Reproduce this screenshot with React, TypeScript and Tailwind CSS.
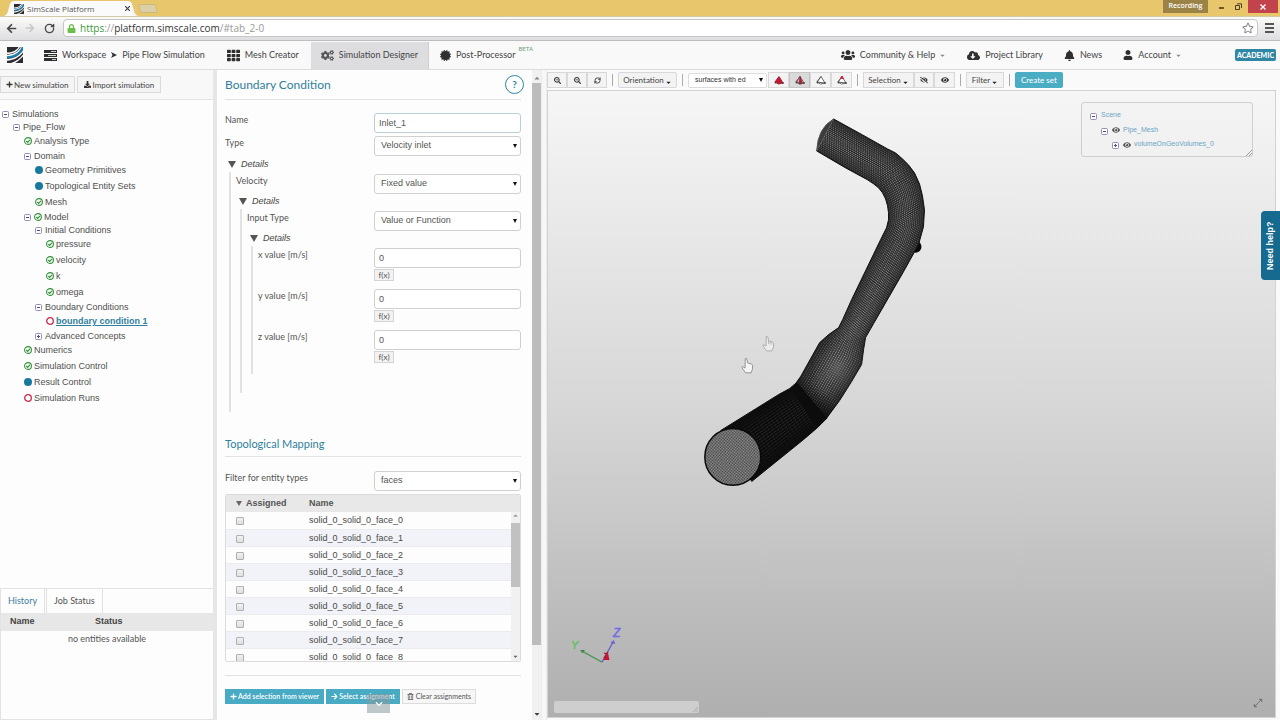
import { useState, type ReactNode } from 'react';
import {
  FaArrowLeft,
  FaArrowRight,
  FaBell,
  FaCaretDown,
  FaCaretUp,
  FaCertificate,
  FaChevronDown,
  FaCloudDownloadAlt,
  FaCogs,
  FaDownload,
  FaEye,
  FaEyeSlash,
  FaLock,
  FaPlus,
  FaRegStar,
  FaRegTrashAlt,
  FaSearchMinus,
  FaTh,
  FaUser,
  FaUsers,
} from 'react-icons/fa';
import { LuRefreshCw, LuRotateCw } from 'react-icons/lu';

type Status = 'ok' | 'info' | 'open';

interface TreeNode {
  label: string;
  status?: Status;
  toggle?: 'minus' | 'plus';
  active?: boolean;
  children?: TreeNode[];
}

const tree: TreeNode[] = [
  {
    label: 'Simulations',
    toggle: 'minus',
    children: [
      {
        label: 'Pipe_Flow',
        toggle: 'minus',
        children: [
          { label: 'Analysis Type', status: 'ok' },
          {
            label: 'Domain',
            toggle: 'minus',
            children: [
              { label: 'Geometry Primitives', status: 'info' },
              { label: 'Topological Entity Sets', status: 'info' },
              { label: 'Mesh', status: 'ok' },
            ],
          },
          {
            label: 'Model',
            toggle: 'minus',
            status: 'ok',
            children: [
              {
                label: 'Initial Conditions',
                toggle: 'minus',
                children: [
                  { label: 'pressure', status: 'ok' },
                  { label: 'velocity', status: 'ok' },
                  { label: 'k', status: 'ok' },
                  { label: 'omega', status: 'ok' },
                ],
              },
              {
                label: 'Boundary Conditions',
                toggle: 'minus',
                children: [{ label: 'boundary condition 1', status: 'open', active: true }],
              },
              { label: 'Advanced Concepts', toggle: 'plus' },
            ],
          },
          { label: 'Numerics', status: 'ok' },
          { label: 'Simulation Control', status: 'ok' },
          { label: 'Result Control', status: 'info' },
          { label: 'Simulation Runs', status: 'open' },
        ],
      },
    ],
  },
];

const faces = Array.from({ length: 9 }, (_, i) => `solid_0_solid_0_face_${i}`);

function Logo({ className }: { className: string }) {
  return (
    <svg viewBox="0 0 16 16" className={className}>
      <rect width="16" height="16" fill="#2c2c30" />
      <path d="M0 5.500 C5 5.500 9 4 11.500 0 H13 C10 5 6 7 0 7z" fill="#fff" />
      <path d="M0 8.500 C7 8 12 5 14.500 0 H16 V4 C12 9 7 11 0 11.500z" fill="#1c7fa8" />
      <path d="M0 7.800 C7 7.300 11 5 13.800 0 H14.800 C12 6 7 8.800 0 9.200z" fill="#fff" />
      <path d="M0 12 C7 11.500 12 9 16 3.500 V5.500 C12 10.500 7 13 0 13.800z" fill="#fff" />
      <path d="M4 16 C9 14.500 13 11.500 16 7.500 V9.500 C13 12.500 11 14.500 8 16z" fill="#fff" />
    </svg>
  );
}

function Toggle({ kind }: { kind: 'minus' | 'plus' }) {
  return (
    <svg viewBox="0 0 7 7" className="mr-px mt-[2px] size-[7px] shrink-0" fill="#fff" stroke="#8f8fb8">
      <rect x="0.5" y="0.5" width="6" height="6" rx="1" />
      <path d={kind === 'plus' ? 'M2 3.500h3M3.500 2v3' : 'M2 3.500h3'} stroke="#4c4c90" />
    </svg>
  );
}

function StatusIcon({ status }: { status: Status }) {
  if (status === 'info') {
    return <span className="size-2 shrink-0 rounded-full bg-[#177a9c]" />;
  }
  if (status === 'open') {
    return (
      <svg viewBox="0 0 8 8" className="size-2 shrink-0" fill="none" stroke="#c8294a">
        <circle cx="4" cy="4" r="3.300" strokeWidth="1.300" />
      </svg>
    );
  }
  return (
    <svg viewBox="0 0 8 8" className="size-2 shrink-0" fill="none" stroke="#2f9138">
      <circle cx="4" cy="4" r="3.400" strokeWidth="1.100" />
      <path d="M2.300 4 L3.600 5.300 L6 2.900" strokeWidth="1.200" />
    </svg>
  );
}

function TreeBranch({ nodes, nested }: { nodes: TreeNode[]; nested?: boolean }) {
  return (
    <ul className={nested ? 'pl-[11px]' : ''}>
      {nodes.map((node) => (
        <li key={node.label}>
          <a
            href="#"
            className={`flex items-center gap-[2px] whitespace-nowrap ${node.toggle ? 'h-[13px]' : 'h-4'} ${
              node.active ? 'font-bold text-[#2f7f9f]' : 'text-[#505050]'
            }`}
          >
            {node.toggle && <Toggle kind={node.toggle} />}
            {node.status && <StatusIcon status={node.status} />}
            <span className={node.active ? 'underline' : ''}>{node.label}</span>
          </a>
          {node.children && <TreeBranch nodes={node.children} nested />}
        </li>
      ))}
    </ul>
  );
}

function BrowserBar() {
  return (
    <div>
      <div className="flex h-4 items-end bg-[#e8c66b]">
        <div className="relative ml-1 flex h-[15px] w-[134px] items-center gap-[3px] pl-[10px] pr-2">
          <svg viewBox="0 0 134 15" className="absolute inset-0 size-full" preserveAspectRatio="none">
            <path d="M0 15 Q3 14 4 10 L6 3 Q7 0 10 0 H124 Q127 0 128 3 L130 10 Q131 14 134 15z" fill="#fafafa" />
          </svg>
          <Logo className="relative size-[10px]" />
          <span className="relative flex-1 font-['Open_Sans',sans-serif] text-[8px] leading-3 text-[#555]">
            SimScale Platform
          </span>
          <button aria-label="Close tab" className="relative">
            <svg viewBox="0 0 5 5" className="size-[5px]" stroke="#444" strokeWidth="1.200">
              <path d="M0 0 L5 5 M5 0 L0 5" />
            </svg>
          </button>
        </div>
        <button aria-label="New tab" className="mb-[3px] ml-px h-[9px] w-[18px] skew-x-12 rounded-xs border border-[#cdb87c] bg-[#dccfa6]" />
        <div className="ml-auto flex h-full items-start">
          <span className="mr-[11px] flex h-[13px] w-[45px] items-center justify-center bg-[#9b8347] font-['Open_Sans',sans-serif] text-[7px] font-semibold text-white">
            Recording
          </span>
          <button aria-label="Minimize" className="mt-[7px] h-[2px] w-[5px] bg-[#6b5a28]" />
          <button aria-label="Restore" className="ml-[11px] mt-[3px]">
            <svg viewBox="0 0 7 7" className="size-[7px]" fill="none" stroke="#4b4020">
              <path d="M0.500 2.500h4v4h-4zM2 0.800h4.500v4.200" />
            </svg>
          </button>
          <button aria-label="Close" className="ml-[6px] mr-[2px] flex h-[13px] w-[30px] items-center justify-center bg-[#c2434c]">
            <svg viewBox="0 0 6 6" className="size-[6px]" stroke="#fff" strokeWidth="1.300">
              <path d="M0.500 0.500 L5.500 5.500 M5.500 0.500 L0.500 5.500" />
            </svg>
          </button>
        </div>
      </div>
      <div className="flex h-[25px] items-start border-t border-b border-t-[#cfcaa8] border-b-[#bdbdc0] bg-gradient-to-b from-[#fbfbf8] to-[#dedee1] pl-[6px] pr-1 pt-[2px]">
        <div className="flex h-[18px] flex-1 items-center">
          <button aria-label="Back"><FaArrowLeft className="size-[11px] text-[#4a4a4a]" /></button>
          <button aria-label="Forward" className="ml-2"><FaArrowRight className="size-[10px] text-[#c8c8c8]" /></button>
          <button aria-label="Reload" className="ml-[9px]"><LuRotateCw strokeWidth={3} className="size-[11px] text-[#4a4a4a]" /></button>
          <div className="ml-2 flex h-full flex-1 items-center rounded-sm border border-[#c6c6c6] bg-white px-[3px]">
            <FaLock className="size-[9px] text-[#6cc04a]" />
            <p className="ml-1 flex-1 font-['Open_Sans',sans-serif] text-[10px] leading-4 text-[#999]">
              <span className="text-[#3c9a3a]">https</span>://
              <span className="text-[#333]">platform.simscale.com</span>/#tab_2-0
            </p>
            <FaRegStar className="size-3 text-[#8a8a8a]" />
          </div>
          <button aria-label="Menu" className="ml-[7px] mr-[2px] flex w-[9px] flex-col gap-[2px]">
            <span className="h-[2px] w-full bg-[#555]" />
            <span className="h-[2px] w-full bg-[#555]" />
            <span className="h-[2px] w-full bg-[#555]" />
          </button>
        </div>
      </div>
    </div>
  );
}

function NavBar() {
  return (
    <nav className="flex h-[29px] items-center whitespace-nowrap border-b border-[#dcdcdc] bg-[#f9f9f9] pr-1 text-[9px] text-[#444]">
      <Logo className="ml-[7px] size-4" />
      <a href="#" className="ml-[21px] flex items-center gap-[5px]">
        <svg viewBox="0 0 13 11" className="h-[11px] w-[13px]" fill="#2f2f2f">
          <path d="M0 0h13v3H0zM0 4h13v3H0zM0 8h13v3H0z" />
          <path d="M7 1h5v1H7zM4 5h8v1H4zM8 9h4v1H8z" fill="#ccc" />
        </svg>
        <span>Workspace</span>
        <svg viewBox="0 0 6 6" className="size-[6px]" fill="#333">
          <path d="M0 0 L6 3 L0 6 L1.500 3z" />
        </svg>
        <span>Pipe Flow Simulation</span>
      </a>
      <a href="#" className="ml-[22px] flex items-center gap-[5px]">
        <FaTh className="size-[13px] text-[#2f2f2f]" />
        Mesh Creator
      </a>
      <a href="#" className="ml-3 flex h-[27px] items-center gap-[5px] border-r border-[#cfcfd2] bg-[#dddde0] px-[10px]">
        <FaCogs className="size-[13px] text-[#555]" />
        Simulation Designer
      </a>
      <a href="#" className="ml-[11px] flex items-center gap-[5px]">
        <FaCertificate className="size-[11px] text-[#2f2f2f]" />
        Post-Processor
        <span className="-ml-[2px] mb-3 text-[6px] leading-none text-[#6f9f78]">BETA</span>
      </a>
      <div className="ml-auto flex items-center gap-[21px]">
        <a href="#" className="flex items-center gap-[5px]">
          <FaUsers className="size-[14px] text-[#2f2f2f]" />
          Community &amp; Help
          <FaCaretDown className="-ml-px size-[7px] text-[#888]" />
        </a>
        <a href="#" className="flex items-center gap-[5px]">
          <FaCloudDownloadAlt className="size-[13px] text-[#2f2f2f]" />
          Project Library
        </a>
        <a href="#" className="flex items-center gap-[5px]">
          <FaBell className="size-[11px] text-[#2f2f2f]" />
          News
        </a>
        <a href="#" className="flex items-center gap-[5px]">
          <FaUser className="size-[10px] text-[#2f2f2f]" />
          Account
          <FaCaretDown className="-ml-px size-[7px] text-[#888]" />
        </a>
      </div>
      <span className="ml-[53px] flex h-3 items-center rounded-xs bg-[#2f87a5] px-[2px] text-[7px] font-black text-white">
        ACADEMIC
      </span>
    </nav>
  );
}

function Sidebar() {
  return (
    <aside className="flex w-[217px] shrink-0 flex-col border-r-4 border-[#e6e6e6] bg-[#fdfdfd]">
      <div className="flex h-[30px] items-center gap-[2px] border-b border-[#e4e4e4] bg-[#f8f8f8] text-[8px] text-[#444]">
        <button className="flex h-[17px] items-center gap-px border border-[#dadada] bg-[#f4f4f4] px-[5px]">
          <FaPlus className="size-[7px] text-[#333]" />
          New simulation
        </button>
        <button className="flex h-[17px] items-center gap-[2px] border border-[#dadada] bg-[#f4f4f4] px-[6px]">
          <FaDownload className="size-[7px] text-[#333]" />
          Import simulation
        </button>
      </div>
      <div className="flex-1 overflow-hidden pl-[2px] pt-[7px] font-['Liberation_Sans',sans-serif] text-[9px] leading-3">
        <TreeBranch nodes={tree} />
      </div>
      <div className="flex h-[132px] shrink-0 flex-col border-b border-l border-t border-[#e2e2e2] text-[9px] text-[#555]">
        <div className="flex h-6 gap-px">
          <button className="border-r border-[#e0e0e0] px-[7px] text-[#3d7da0]">History</button>
          <button className="border-x border-[#e0e0e0] px-[7px]">Job Status</button>
        </div>
        <table className="w-full">
          <thead>
            <tr className="h-[18px] bg-[#e7e7e7] font-['Liberation_Sans',sans-serif] text-[#444]">
              <th className="w-[94px] pl-[9px] text-left font-bold">Name</th>
              <th className="text-left font-bold">Status</th>
            </tr>
          </thead>
          <tbody>
            <tr className="h-4">
              <td colSpan={2} className="text-center">no entities available</td>
            </tr>
          </tbody>
        </table>
      </div>
    </aside>
  );
}

function SelectField({ id, value }: { id: string; value: string }) {
  return (
    <div className="relative">
      <select
        id={id}
        className="block h-5 w-full appearance-none rounded-[3px] border border-[#d0d0d0] bg-white pl-[6px] pr-3 font-['Liberation_Sans',sans-serif] text-[9px] text-[#555]"
      >
        <option>{value}</option>
      </select>
      <svg viewBox="0 0 4 4" className="pointer-events-none absolute right-1 top-2 size-1" fill="#111">
        <path d="M0 0h4L2 4z" />
      </svg>
    </div>
  );
}

function Row({ id, label, children }: { id: string; label: string; children: ReactNode }) {
  return (
    <div className="flex items-start justify-between">
      <label htmlFor={id} className="pt-px leading-3">{label}</label>
      <div className="w-[147px] shrink-0">{children}</div>
    </div>
  );
}

function Details({ className, children }: { className: string; children: ReactNode }) {
  return (
    <details open>
      <summary className="flex h-[15px] list-none items-center gap-[5px] pl-[3px] font-['Liberation_Sans',sans-serif] italic text-[#444]">
        <svg viewBox="0 0 8 7" className="h-[7px] w-2" fill="#555">
          <path d="M0 0h8L4 7z" />
        </svg>
        Details
      </summary>
      <div className={`ml-1 border-l-2 border-[#e2e2e2] pl-[5px] pt-[2px] ${className}`}>{children}</div>
    </details>
  );
}

const inputClass =
  "block h-5 w-full rounded-[3px] border bg-white px-1 font-['Liberation_Sans',sans-serif] text-[9px] text-[#555]";

function ConditionForm() {
  const [name, setName] = useState('Inlet_1');

  return (
    <section className="flex w-[324px] shrink-0 bg-[#fdfdfd] text-[9px] text-[#555]">
      <div className="w-[315px] shrink-0 pl-2 pr-[11px]">
        <div className="flex h-[30px] items-center justify-between border-b border-[#e2e2e2]">
          <h1 className="pt-px text-[12px] text-[#2f7f9f]">Boundary Condition</h1>
          <button className="-mr-[3px] flex size-[19px] items-center justify-center rounded-full border border-[#2f87a5] text-[10px] font-bold text-[#2f87a5]">
            ?
          </button>
        </div>

        <form className="pt-[13px]">
          <div className="space-y-[3px] pb-px">
            <Row id="name" label="Name">
              <input id="name" value={name} onChange={(e) => setName(e.target.value)} className={`${inputClass} border-[#b9cfd6]`} />
            </Row>
            <Row id="type" label="Type">
              <SelectField id="type" value="Velocity inlet" />
            </Row>
          </div>
          <Details className="pb-[19px]">
            <Row id="velocity" label="Velocity">
              <SelectField id="velocity" value="Fixed value" />
            </Row>
            <Details className="pb-[19px]">
              <Row id="input-type" label="Input Type">
                <SelectField id="input-type" value="Value or Function" />
              </Row>
              <Details className="space-y-2 pb-[11px]">
                {['x', 'y', 'z'].map((axis) => (
                  <Row key={axis} id={`${axis}-value`} label={`${axis} value [m/s]`}>
                    <input id={`${axis}-value`} defaultValue="0" className={`${inputClass} border-[#d0d0d0]`} />
                    <button type="button" className="mt-px flex h-3 w-5 items-center justify-center border border-[#d4d4d4] bg-[#f2f2f2] text-[8px]">
                      f(x)
                    </button>
                  </Row>
                ))}
              </Details>
            </Details>
          </Details>

          <h2 className="mb-[14px] mt-6 border-b border-[#e2e2e2] pb-1 text-[11px] leading-4 text-[#2f7f9f]">
            Topological Mapping
          </h2>
          <Row id="entity" label="Filter for entity types">
            <SelectField id="entity" value="faces" />
          </Row>

          <div className="mt-[3px] flex h-[168px] flex-col overflow-hidden rounded-xs border border-[#dcdcdc] font-['Liberation_Sans',sans-serif]">
            <div className="flex h-[17px] shrink-0 items-center bg-[#e8e8e8] font-bold text-[#555]">
              <span className="flex w-[83px] items-center gap-1 pl-[10px]">
                <svg viewBox="0 0 6 5" className="h-[5px] w-[6px]" fill="#666">
                  <path d="M0 0h6L3 5z" />
                </svg>
                Assigned
              </span>
              <span>Name</span>
            </div>
            <div className="flex min-h-0 flex-1">
              <table className="h-fit flex-1">
                <tbody>
                  {faces.map((face) => (
                    <tr key={face} className="h-[17px] border-b border-[#ececf0] even:bg-[#f2f3f8]">
                      <td className="w-[83px] pl-[10px]">
                        <input
                          type="checkbox"
                          aria-label={`Assign ${face}`}
                          className="mt-[2px] block size-2 appearance-none rounded-[1px] border border-[#b0b0b0] bg-gradient-to-b from-[#f2f2f2] to-[#dedede] checked:bg-[#2f87a5]"
                        />
                      </td>
                      <td className="leading-4 text-[#4a4a4a]">{face}</td>
                    </tr>
                  ))}
                </tbody>
              </table>
              <div className="flex w-[9px] flex-col items-center bg-[#f1f1f1]">
                <FaCaretUp className="size-[7px] shrink-0 text-[#999]" />
                <div className="mt-1 h-16 w-full shrink-0 bg-[#c1c1c1]" />
                <FaCaretDown className="mb-px mt-auto size-[7px] shrink-0 text-[#666]" />
              </div>
            </div>
          </div>

          <div className="relative mt-[13px] flex gap-[2px] whitespace-nowrap border-t border-[#e2e2e2] pt-[13px] text-[7px]">
            <button type="button" className="flex h-[15px] items-center gap-px bg-[#48abc3] px-[5px] font-semibold text-white">
              <FaPlus className="size-[7px]" />
              Add selection from viewer
            </button>
            <button type="button" className="flex h-[15px] items-center gap-px bg-[#48abc3] px-[5px] font-semibold text-white">
              <FaArrowRight className="size-[7px]" />
              Select assignment
            </button>
            <button type="button" className="flex h-[15px] items-center gap-[2px] border border-[#dcdcdc] bg-[#f6f6f6] px-1">
              <FaRegTrashAlt className="size-[7px]" />
              Clear assignments
            </button>
            <span className="absolute left-[142px] top-[18px] flex h-[19px] w-[23px] items-center justify-center bg-[#8a9aa0]/55">
              <FaChevronDown className="size-2 text-white" />
            </span>
          </div>
        </form>
      </div>
      <div className="ml-auto flex w-[9px] flex-col items-center bg-[#f1f1f1] pb-[2px] pt-1">
        <FaCaretUp className="size-2 text-[#888]" />
        <div className="mt-px h-[562px] w-full bg-[#bcbcbc]" />
        <FaCaretDown className="mt-auto size-2 text-[#444]" />
      </div>
    </section>
  );
}

const toolButton = 'flex h-4 items-center justify-center border border-[#d8d8d8] bg-[#f3f3f3]';

function Divider() {
  return <span className="mx-[5px] h-3 w-px bg-[#aaa]" />;
}

function MeshIcon({ mode }: { mode: 'solid' | 'edges' | 'wire' | 'points' }) {
  return (
    <svg viewBox="0 0 10 10" className="size-[10px]" strokeWidth="0.9" strokeLinejoin="round">
      <path
        d="M5 1.500 L9 8 L4.500 9 L1 7z"
        fill={mode === 'solid' ? '#c81630' : mode === 'edges' ? '#e8aab0' : '#fff'}
        stroke={mode === 'solid' ? '#a01228' : '#555'}
      />
      {mode === 'edges' && <path d="M5 1.500 L4.500 9 L7 8.500z" fill="#c81630" stroke="#a01228" />}
      {mode !== 'solid' && <path d="M5 1.500 L1 7 L9 8" fill="none" stroke="#555" />}
      {mode === 'points' && <path d="M3.500 3.500 L5 1 L6.500 3.500z" fill="#d8203c" stroke="#d8203c" />}
      <circle cx="1.500" cy="7.500" r="1" fill="#444" />
      <circle cx="9" cy="8" r="0.900" fill="#444" />
    </svg>
  );
}

function ViewerToolbar() {
  return (
    <div className="flex h-5 items-center text-[8px] text-[#444]">
      <button aria-label="Zoom in" className={`${toolButton} w-5`}><FaSearchMinus className="size-[7px] text-[#333]" /></button>
      <button aria-label="Zoom out" className={`${toolButton} w-5`}><FaSearchMinus className="size-[7px] text-[#333]" /></button>
      <button aria-label="Refresh" className={`${toolButton} w-5`}><LuRefreshCw strokeWidth={3} className="size-[7px] text-[#333]" /></button>
      <Divider />
      <button className={`${toolButton} w-[59px] gap-px rounded-xs`}>
        Orientation <FaCaretDown className="mt-1 size-[7px] text-[#222]" />
      </button>
      <Divider />
      <div className="relative mr-px w-[79px]">
        <select
          aria-label="Render mode"
          className="block h-[15px] w-full appearance-none rounded-[2px] border border-[#ddd] bg-white pl-[6px] font-['Liberation_Sans',sans-serif] text-[7px] text-[#333]"
        >
          <option>surfaces with ed</option>
        </select>
        <svg viewBox="0 0 4 4" className="pointer-events-none absolute right-1 top-[5px] size-1" fill="#111">
          <path d="M0 0h4L2 4z" />
        </svg>
      </div>
      <button aria-label="Surfaces" className={`${toolButton} w-[21px]`}><MeshIcon mode="solid" /></button>
      <button aria-label="Surfaces with edges" className="flex h-4 w-[21px] items-center justify-center border border-[#c4c4c4] bg-[#dadada]">
        <MeshIcon mode="edges" />
      </button>
      <button aria-label="Wireframe" className={`${toolButton} w-[21px]`}><MeshIcon mode="wire" /></button>
      <button aria-label="Points" className={`${toolButton} w-[21px]`}><MeshIcon mode="points" /></button>
      <Divider />
      <button className={`${toolButton} w-[51px] gap-px`}>
        Selection <FaCaretDown className="mt-1 size-[7px] text-[#222]" />
      </button>
      <button aria-label="Hide" className={`${toolButton} w-5`}><FaEyeSlash className="size-2 text-[#444]" /></button>
      <button aria-label="Show" className={`${toolButton} w-[21px]`}><FaEye className="size-2 text-[#333]" /></button>
      <Divider />
      <button className={`${toolButton} w-[38px] gap-px`}>
        Filter <FaCaretDown className="mt-1 size-[7px] text-[#222]" />
      </button>
      <Divider />
      <button className="flex h-4 items-center rounded-xs bg-[#4badc4] px-[6px] text-white">Create set</button>
    </div>
  );
}

// matching points on the two silhouettes of the pipe: [leftX, leftY, rightX, rightY]
const upperPipe = [
  [817, 151, 834, 119],
  [846, 168, 863, 135],
  [868, 180, 888, 149],
  [874, 184, 896, 153],
  [879, 188, 903, 159],
  [883, 193, 909, 165],
  [886, 199, 915, 173],
  [888, 206, 920, 184],
  [889, 213, 923, 196],
  [889, 220, 925, 210],
  [887, 228, 924, 227],
  [881, 240, 919, 245],
  [866, 271, 904, 272],
  [852, 300, 889, 298],
  [843, 320, 874, 324],
  [839, 328, 866, 338],
  [829, 335, 864, 350],
  [820, 343, 862, 365],
  [811, 359, 852, 382],
  [801, 377, 840, 401],
  [796, 384, 826, 420],
];

const lowerPipe = [
  [721, 431, 752, 482],
  [779, 395, 804, 440],
  [790, 389, 818, 428],
  [797, 383, 827, 419],
];

function outline(pairs: number[][]) {
  const left = pairs.map(([x, y]) => `${x} ${y}`);
  const right = pairs.map(([, , x, y]) => `${x} ${y}`).reverse();
  return `M${left.concat(right).join(' L')}z`;
}

function strand(pairs: number[][], t: number) {
  return 'M' + pairs.map(([ax, ay, bx, by]) => `${(ax + (bx - ax) * t).toFixed(1)} ${(ay + (by - ay) * t).toFixed(1)}`).join(' L');
}

function PipeScene() {
  const strands = Array.from({ length: 19 }, (_, i) => (i + 1) / 20);

  return (
    <svg viewBox="548 91 728 627" className="absolute inset-0 size-full">
      <defs>
        <pattern id="mesh" width="2" height="2" patternUnits="userSpaceOnUse" patternTransform="rotate(20)">
          <rect width="2" height="2" fill="#9a9a9a" />
          <rect width="1" height="1" fill="#333" />
          <rect x="1" y="1" width="1" height="1" fill="#444" />
        </pattern>
        <radialGradient id="bulge">
          <stop offset="0" stopColor="#aaa" stopOpacity="0.3" />
          <stop offset="1" stopColor="#aaa" stopOpacity="0" />
        </radialGradient>
        <linearGradient id="joint" x1="803" y1="409" x2="820" y2="389" gradientUnits="userSpaceOnUse">
          <stop offset="0.200" stopColor="#0a0a0a" stopOpacity="0.950" />
          <stop offset="1" stopColor="#0a0a0a" stopOpacity="0" />
        </linearGradient>
      </defs>

      <circle cx="916" cy="247" r="6" fill="#0a0a0a" />
      <path d={outline(upperPipe)} fill="#242424" stroke="#111" strokeLinejoin="round" />
      <path d="M834 119 Q818 128 817 151z" fill="#3c3c3c" stroke="#555" />
      {strands.map((t, i) => (
        <path
          key={t}
          d={strand(upperPipe, t)}
          fill="none"
          stroke="#9c9c9c"
          strokeOpacity={0.2 + 0.65 * Math.sin(Math.PI * t)}
          strokeWidth="1.100"
          strokeDasharray="1.200 0.900"
          strokeDashoffset={i % 2}
        />
      ))}
      <ellipse cx="838" cy="367" rx="24" ry="34" fill="url(#bulge)" transform="rotate(28 838 367)" />
      <path d={outline(lowerPipe)} fill="#0c0c0c" stroke="#0c0c0c" strokeLinejoin="round" />
      {strands.map((t) => (
        <path
          key={t}
          d={strand(lowerPipe.slice(0, 3), t)}
          fill="none"
          stroke="#666"
          strokeOpacity={0.6 * Math.sin(Math.PI * t)}
          strokeWidth="0.6"
          strokeDasharray="3 1"
        />
      ))}
      <path d="M811 359 L796 384 L826 420 L840 401 L846 391z" fill="url(#joint)" />
      <ellipse cx="733" cy="457.500" rx="28" ry="28.500" fill="url(#mesh)" stroke="#0a0a0a" strokeWidth="1.500" />

      <g fill="#f4f4f4" stroke="#8c8c8c" strokeWidth="0.900" strokeLinejoin="round">
        <path d="M745.500 359 q1.300 -1 1.600 0.500 l0.900 4 l3.400 0.800 q1.400 0.400 1.400 2 v3 l-1.500 4 h-5.500 l-3.500 -5 q-0.500 -1.500 1.200 -1 l1.800 1.200z" />
      </g>
      <g fill="#ececec" stroke="#a8a8a8" strokeWidth="0.900" strokeLinejoin="round">
        <path d="M766.500 337 q1.300 -1 1.600 0.500 l0.900 4 l3.400 0.800 q1.400 0.400 1.400 2 v3 l-1.500 4 h-5.500 l-3.500 -5 q-0.500 -1.500 1.200 -1 l1.800 1.200z" />
        <path d="M769 341.500v3M771.300 342v3" />
      </g>

      <g strokeWidth="1.300" fill="none">
        <path d="M602 663 L582 652" stroke="#4f9a58" />
        <path d="M602 663 L613 643" stroke="#6a62cc" />
        <path d="M604 659 L608 653 M604 654 l4 1" stroke="#b01830" />
      </g>
      <path d="M580 651 l5 0 l-2.500 3.500z" fill="#3f8a48" />
      <path d="M613.500 641 l2 4 l-5 -1z" fill="#6a62cc" />
      <path d="M608 654 l1.500 7 l-6.500 0z" fill="#c41430" />
      <text x="571" y="650" fontSize="11" fontStyle="italic" fontFamily="Liberation Sans" fill="#5cc25a" stroke="#5cc25a" strokeWidth="0.400">Y</text>
      <text x="613" y="638" fontSize="12" fontStyle="italic" fontFamily="Liberation Sans" fill="#7468e8" stroke="#7468e8" strokeWidth="0.400">Z</text>
    </svg>
  );
}

function Viewer() {
  return (
    <main className="flex min-w-0 flex-1 flex-col bg-[#fafafa] pb-[2px] pr-1">
      <ViewerToolbar />
      <div className="relative min-h-0 flex-1 border border-[#d2d2d2] bg-gradient-to-b from-[#f6f6f6] via-[#d7d7d7] to-[#afafaf]">
        <PipeScene />
        <div className="absolute right-[22px] top-[11px] h-[55px] w-[172px] rounded-[3px] border border-[#cfcfcf] bg-[#f2f2f2]/60 pl-2 pt-[5px] font-['Liberation_Sans',sans-serif] text-[7px] text-[#6aa5c4]">
          <p className="flex h-[15px] items-center gap-[3px]"><Toggle kind="minus" />Scene</p>
          <p className="flex h-[14px] items-center gap-[3px] pl-[11px]">
            <Toggle kind="minus" /><FaEye className="size-2 text-[#555]" />Pipe_Mesh
          </p>
          <p className="flex h-[15px] items-center gap-[3px] pl-[22px]">
            <Toggle kind="plus" /><FaEye className="size-2 text-[#555]" />volumeOnGeoVolumes_0
          </p>
          <svg viewBox="0 0 6 6" className="absolute bottom-0 right-0 size-[6px]" stroke="#888" strokeWidth="0.800">
            <path d="M0 6 L6 0 M3 6 L6 3" />
          </svg>
        </div>
        <div className="absolute bottom-1 left-[6px] h-3 w-[145px] rounded-xs bg-[#cecece]">
          <svg viewBox="0 0 6 6" className="absolute bottom-px right-px size-[5px]" stroke="#a5a5a5">
            <path d="M0 6 L6 0 M3 6 L6 3" />
          </svg>
        </div>
        <svg viewBox="0 0 10 10" className="absolute bottom-[9px] right-3 size-[10px]" fill="#777" stroke="#777">
          <path d="M2 8 L8 2" />
          <path d="M6 1h3v3zM1 6v3h3z" strokeWidth="0.500" />
        </svg>
      </div>
    </main>
  );
}

export default function App() {
  return (
    <div className="relative flex h-screen flex-col overflow-hidden bg-white font-['Lato',sans-serif]">
      <BrowserBar />
      <NavBar />
      <div className="flex min-h-0 flex-1">
        <Sidebar />
        <ConditionForm />
        <div className="w-[6px] shrink-0 border-x border-[#ececec] bg-[#f7f7f7]" />
        <Viewer />
      </div>
      <button className="absolute right-0 top-[211px] flex h-[69px] w-[19px] rotate-180 items-center justify-center rounded-r-[4px] bg-[#176a8f] font-['Liberation_Sans',sans-serif] text-[9px] font-bold text-white [writing-mode:vertical-rl]">
        Need help?
      </button>
    </div>
  );
}
